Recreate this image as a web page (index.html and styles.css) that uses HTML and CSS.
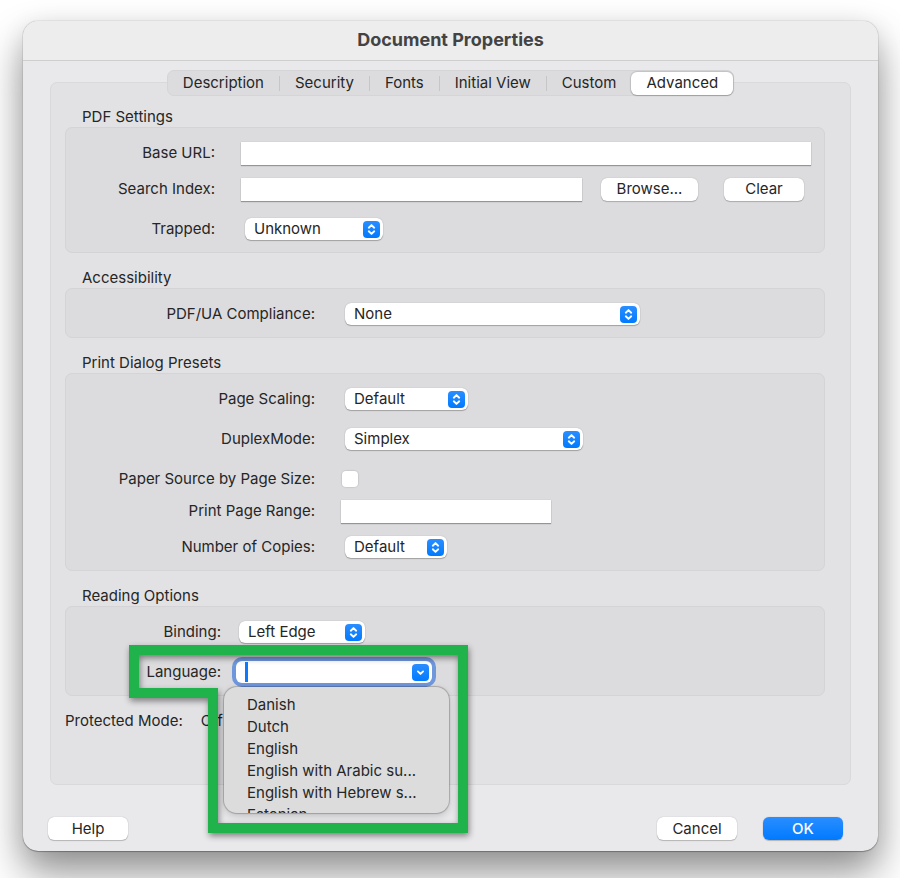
FILE: index.html
```html
<!DOCTYPE html>
<html lang="en">
<head>
<meta charset="utf-8">
<title>Document Properties</title>
<link rel="stylesheet" href="styles.css">
</head>
<body>
<svg class="defs" aria-hidden="true">
  <symbol id="updown" viewBox="0 0 17 17">
    <path d="M5.8 6.7 8.5 4.1l2.7 2.6M5.8 10.3l2.7 2.6 2.7-2.6" fill="none" stroke="#fff" stroke-width="1.9" stroke-linecap="round" stroke-linejoin="round"/>
  </symbol>
  <symbol id="down" viewBox="0 0 17 17">
    <path d="M5.9 7.4 8.5 9.9l2.6-2.5" fill="none" stroke="#fff" stroke-width="1.9" stroke-linecap="round" stroke-linejoin="round"/>
  </symbol>
</svg>

<main class="window">
  <header class="titlebar"><h1>Document Properties</h1></header>

  <div class="content">
    <div class="tabs" role="tablist">
      <button class="tab" role="tab" type="button">Description</button>
      <span class="sep"></span>
      <button class="tab" role="tab" type="button">Security</button>
      <span class="sep"></span>
      <button class="tab" role="tab" type="button">Fonts</button>
      <span class="sep"></span>
      <button class="tab" role="tab" type="button">Initial View</button>
      <span class="sep"></span>
      <button class="tab" role="tab" type="button">Custom</button>
      <button class="tab active" role="tab" type="button" aria-selected="true">Advanced</button>
    </div>

    <form class="panel" id="properties">
      <section class="group labels-narrow">
        <h2>PDF Settings</h2>
        <div class="box">
          <div class="row">
            <label for="base-url">Base URL:</label>
            <input class="field grow" id="base-url" type="text">
          </div>
          <div class="row">
            <label for="search-index">Search Index:</label>
            <input class="field grow" id="search-index" type="text">
            <div class="row-buttons">
              <button class="button browse" type="button">Browse...</button>
              <button class="button" type="button">Clear</button>
            </div>
          </div>
          <div class="row spaced">
            <label for="trapped">Trapped:</label>
            <span class="select w-trapped"><select id="trapped"><option>Unknown</option></select><svg class="knob"><use href="#updown"/></svg></span>
          </div>
        </div>
      </section>

      <section class="group labels-wide">
        <h2>Accessibility</h2>
        <div class="box">
          <div class="row">
            <label for="pdfua">PDF/UA Compliance:</label>
            <span class="select w-pdfua"><select id="pdfua"><option>None</option></select><svg class="knob"><use href="#updown"/></svg></span>
          </div>
        </div>
      </section>

      <section class="group labels-wide">
        <h2>Print Dialog Presets</h2>
        <div class="box">
          <div class="row">
            <label for="scaling">Page Scaling:</label>
            <span class="select w-scaling"><select id="scaling"><option>Default</option></select><svg class="knob"><use href="#updown"/></svg></span>
          </div>
          <div class="row spaced">
            <label for="duplex">DuplexMode:</label>
            <span class="select w-duplex"><select id="duplex"><option>Simplex</option></select><svg class="knob"><use href="#updown"/></svg></span>
          </div>
          <div class="row spaced">
            <label for="paper">Paper Source by Page Size:</label>
            <input class="check" id="paper" type="checkbox">
          </div>
          <div class="row tight">
            <label for="range">Print Page Range:</label>
            <input class="field w-range" id="range" type="text">
          </div>
          <div class="row">
            <label for="copies">Number of Copies:</label>
            <span class="select w-copies"><select id="copies"><option>Default</option></select><svg class="knob"><use href="#updown"/></svg></span>
          </div>
        </div>
      </section>

      <section class="group labels-reading">
        <h2>Reading Options</h2>
        <div class="box">
          <div class="row">
            <label for="binding">Binding:</label>
            <span class="select w-binding"><select id="binding"><option>Left Edge</option></select><svg class="knob"><use href="#updown"/></svg></span>
          </div>
          <div class="row spaced">
            <label for="language">Language:</label>
            <div class="combo">
              <svg class="callout" viewBox="0 0 360 210" aria-hidden="true">
                <path d="M15 15H344V193H94V58H15Z" fill="none" stroke="#20b34c" stroke-width="10"/>
              </svg>
              <input id="language" type="text" role="combobox" aria-expanded="true" aria-controls="languages">
              <span class="caret"></span>
              <button class="combo-toggle" type="button" aria-label="Show languages"><svg class="knob"><use href="#down"/></svg></button>
              <ul class="menu" id="languages" role="listbox">
                <li role="option">Danish</li>
                <li role="option">Dutch</li>
                <li role="option">English</li>
                <li role="option">English with Arabic su...</li>
                <li role="option">English with Hebrew s...</li>
                <li role="option">Estonian</li>
              </ul>
            </div>
          </div>
        </div>
      </section>

      <p class="protected"><span>Protected Mode:</span><span>Off</span></p>
    </form>
  </div>

  <footer class="actions">
    <button class="button" type="button">Help</button>
    <div class="confirm">
      <button class="button" type="button">Cancel</button>
      <button class="button primary" type="submit" form="properties">OK</button>
    </div>
  </footer>
</main>
</body>
</html>
```

FILE: styles.css
```css
* {
  box-sizing: border-box;
}

body {
  margin: 0;
  padding: 21px 22px 27px 23px;
  background: #fff;
  color: #262626;
  font: 15px/20px Inter, "Liberation Sans", sans-serif;
}

button,
input,
select {
  margin: 0;
  padding: 0;
  border: 0;
  color: inherit;
  font: inherit;
  outline: none;
}

h1,
h2,
p,
ul {
  margin: 0;
  padding: 0;
  font: inherit;
}

.defs {
  display: none;
}

.window {
  border-radius: 15px;
  background: #e9e9eb;
  box-shadow: 0 0 1px rgba(0, 0, 0, 0.5), 0 1px 1px rgba(0, 0, 0, 0.25), 0 22px 40px rgba(0, 0, 0, 0.42), 0 4px 24px rgba(0, 0, 0, 0.08);
}

.titlebar {
  padding: 9px 0 10px;
  border-bottom: 1px solid #cfcfd0;
  border-radius: 15px 15px 0 0;
  background: #ededee;
  text-align: center;
}

.titlebar h1 {
  color: #434343;
  font-size: 18px;
  font-weight: 700;
}

.content {
  padding: 9px 27px 0 27px;
}

.tabs {
  position: relative;
  display: flex;
  align-items: center;
  width: max-content;
  height: 26px;
  margin: 0 auto -14px;
  border: 1px solid #d5d5d7;
  border-radius: 7px;
  background: #dcdcde;
}

.tab {
  height: 23px;
  padding: 0 15px;
  border-radius: 6px;
  background: transparent;
}

.tab.active {
  background: #fff;
  box-shadow: 0 0 1px 1px rgba(0, 0, 0, 0.12), 0 1px 1px rgba(0, 0, 0, 0.16);
}

.sep {
  width: 1px;
  height: 15px;
  background: #c6c6c8;
}

.panel {
  padding: 24px 25px 53px 14px;
  border: 1px solid #d9d9db;
  border-radius: 7px;
  background: #e2e2e4;
}

.group {
  margin-bottom: 15px;
}

.group h2 {
  padding-left: 17px;
}

.box {
  padding: 13px 13px 11px 0;
  border: 1px solid #d4d4d6;
  border-radius: 7px;
  background: #dcdcde;
}

.row {
  display: flex;
  align-items: center;
  height: 24px;
}

.row + .row {
  margin-top: 12px;
}

.row + .row.spaced {
  margin-top: 16px;
}

.row + .row.tight {
  margin-top: 8px;
}

.row label {
  flex: none;
  margin-right: 26px;
  text-align: right;
}

.labels-narrow label {
  width: 149px;
}

.labels-wide label {
  width: 249px;
}

.labels-reading label {
  width: 155px;
  margin-right: 15px;
}

.field {
  height: 23px;
  padding: 0 6px;
  background: #fff;
  box-shadow: 0 1px 1px rgba(0, 0, 0, 0.3), 0 0 1px rgba(0, 0, 0, 0.15);
}

.grow {
  flex: 1;
  min-width: 0;
}

.w-range {
  width: 210px;
}

.row-buttons {
  display: flex;
  gap: 26px;
  padding: 0 7px 0 19px;
}

.button {
  width: 80px;
  height: 23px;
  border-radius: 6px;
  background: #fff;
  box-shadow: 0 0 1px rgba(0, 0, 0, 0.3), 0 1px 1px rgba(0, 0, 0, 0.2);
}

.button.browse {
  width: 97px;
}

.button.primary {
  background: linear-gradient(#2a8eff, #007aff);
  color: #fff;
  font-weight: 500;
}

.select {
  position: relative;
  display: flex;
  margin-left: 4px;
}

.labels-reading .select {
  margin-left: 3px;
}

.select select {
  width: 100%;
  height: 22px;
  padding: 0 30px 0 9px;
  border-radius: 6px;
  background: #fff;
  box-shadow: 0 0 1px rgba(0, 0, 0, 0.3), 0 1px 1px rgba(0, 0, 0, 0.25);
  appearance: none;
}

.w-trapped {
  width: 138px;
}

.w-pdfua {
  width: 295px;
}

.w-scaling {
  width: 123px;
}

.w-duplex {
  width: 238px;
}

.w-copies {
  width: 102px;
}

.w-binding {
  width: 126px;
}

.knob {
  display: block;
  width: 17px;
  height: 17px;
  border-radius: 4px;
  background: linear-gradient(#2a8eff, #007aff);
}

.select .knob {
  position: absolute;
  top: 3px;
  right: 3px;
  pointer-events: none;
}

.check {
  width: 16px;
  height: 16px;
  margin-left: 1px;
  border-radius: 4px;
  background: #fff;
  box-shadow: 0 0 1px 1px rgba(0, 0, 0, 0.08);
  appearance: none;
}

.combo {
  position: relative;
  display: flex;
  align-items: center;
  width: 196px;
  height: 22px;
  padding-right: 3px;
  border-radius: 6px;
  background: #fff;
  box-shadow: 0 0 0 4px #6f97dc;
}

.combo input {
  flex: 1;
  min-width: 0;
  height: 20px;
  padding-left: 10px;
  background: transparent;
  caret-color: #0a7aff;
}

.combo-toggle {
  background: transparent;
}

.caret {
  position: absolute;
  top: 1px;
  left: 9px;
  width: 3px;
  height: 20px;
  background: #0a7aff;
}

.callout {
  position: absolute;
  top: -26px;
  left: -117px;
  width: 360px;
  height: 210px;
  filter: drop-shadow(1px 3px 3px rgba(0, 0, 0, 0.45));
  pointer-events: none;
}

.menu {
  position: absolute;
  top: 26px;
  left: -12px;
  width: 225px;
  height: 126px;
  padding: 7px 0 0 23px;
  border-radius: 13px;
  background: #dcdcdc;
  box-shadow: 0 0 1px 1px rgba(0, 0, 0, 0.22), 0 3px 8px rgba(0, 0, 0, 0.18);
  line-height: 22px;
  list-style: none;
  overflow: hidden;
}

.protected {
  display: flex;
  gap: 18px;
}

.actions {
  display: flex;
  justify-content: space-between;
  padding: 32px 35px 11px 25px;
}

.confirm {
  display: flex;
  gap: 26px;
}
```
